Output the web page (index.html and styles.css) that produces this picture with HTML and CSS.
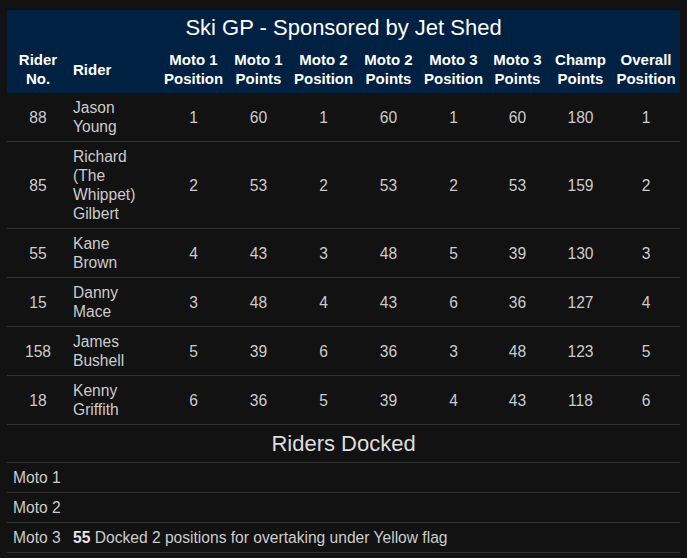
FILE: index.html
```html
<!DOCTYPE html>
<html>
<head>
<meta charset="utf-8">
<link rel="stylesheet" href="styles.css">
</head>
<body>
<table class="results">
  <colgroup>
    <col class="w-no">
    <col class="w-name">
    <col class="w-65"><col class="w-65"><col class="w-65"><col class="w-65"><col class="w-65">
    <col class="w-63"><col class="w-63"><col class="w-68">
  </colgroup>
  <thead>
    <tr><th class="title" colspan="10">Ski GP - Sponsored by Jet Shed</th></tr>
    <tr class="cols">
      <th>Rider No.</th>
      <th class="left">Rider</th>
      <th>Moto 1 Position</th>
      <th>Moto 1 Points</th>
      <th>Moto 2 Position</th>
      <th>Moto 2 Points</th>
      <th>Moto 3 Position</th>
      <th>Moto 3 Points</th>
      <th>Champ Points</th>
      <th>Overall Position</th>
    </tr>
  </thead>
  <tbody>
    <tr><td>88</td><td class="name">Jason Young</td><td>1</td><td>60</td><td>1</td><td>60</td><td>1</td><td>60</td><td>180</td><td>1</td></tr>
    <tr><td>85</td><td class="name">Richard (The Whippet) Gilbert</td><td>2</td><td>53</td><td>2</td><td>53</td><td>2</td><td>53</td><td>159</td><td>2</td></tr>
    <tr><td>55</td><td class="name">Kane Brown</td><td>4</td><td>43</td><td>3</td><td>48</td><td>5</td><td>39</td><td>130</td><td>3</td></tr>
    <tr><td>15</td><td class="name">Danny Mace</td><td>3</td><td>48</td><td>4</td><td>43</td><td>6</td><td>36</td><td>127</td><td>4</td></tr>
    <tr><td>158</td><td class="name">James Bushell</td><td>5</td><td>39</td><td>6</td><td>36</td><td>3</td><td>48</td><td>123</td><td>5</td></tr>
    <tr><td>18</td><td class="name">Kenny Griffith</td><td>6</td><td>36</td><td>5</td><td>39</td><td>4</td><td>43</td><td>118</td><td>6</td></tr>
  </tbody>
  <tbody class="docked">
    <tr><td class="docked-title" colspan="10">Riders Docked</td></tr>
    <tr><td class="moto">Moto 1</td><td class="note" colspan="9"></td></tr>
    <tr><td class="moto">Moto 2</td><td class="note" colspan="9"></td></tr>
    <tr><td class="moto">Moto 3</td><td class="note" colspan="9"><b>55</b> Docked 2 positions for overtaking under Yellow flag</td></tr>
  </tbody>
</table>
</body>
</html>
```
FILE: styles.css
```css
html, body {
  background: #121212;
}
body {
  margin: 10px 7px;
  font-family: "Liberation Sans", Arial, sans-serif;
  font-size: 15px;
  line-height: 19px;
  color: #cccccc;
}
.results {
  width: 673px;
  table-layout: fixed;
  border-collapse: collapse;
  border-spacing: 0;
}
.w-no { width: 62px; }
.w-name { width: 92px; }
.w-65 { width: 65px; }
.w-63 { width: 63px; }
.w-68 { width: 68px; }

.results thead th {
  background: #002142;
  color: #ffffff;
  font-weight: bold;
  text-align: center;
  vertical-align: middle;
  padding: 5px 3px;
}
.results thead th.title {
  font-size: 22px;
  line-height: 25px;
  font-weight: normal;
  padding: 5px 0 5px;
}
.results thead th.left {
  text-align: left;
  padding-left: 4px;
}
.results td {
  font-size: 15.6px;
  padding: 5px 4px;
  text-align: center;
  vertical-align: middle;
  border-bottom: 1px solid #333333;
}
.results td.name {
  text-align: left;
  padding-right: 12px;
}
.docked td.docked-title {
  font-size: 22px;
  line-height: 27px;
  color: #dddddd;
  text-align: center;
}
.docked td.moto {
  text-align: left;
  padding-left: 6px;
  white-space: nowrap;
}
.docked td.note {
  text-align: left;
  padding-right: 4px;
}
.docked td.note b {
  color: #e6e6e6;
}
```
